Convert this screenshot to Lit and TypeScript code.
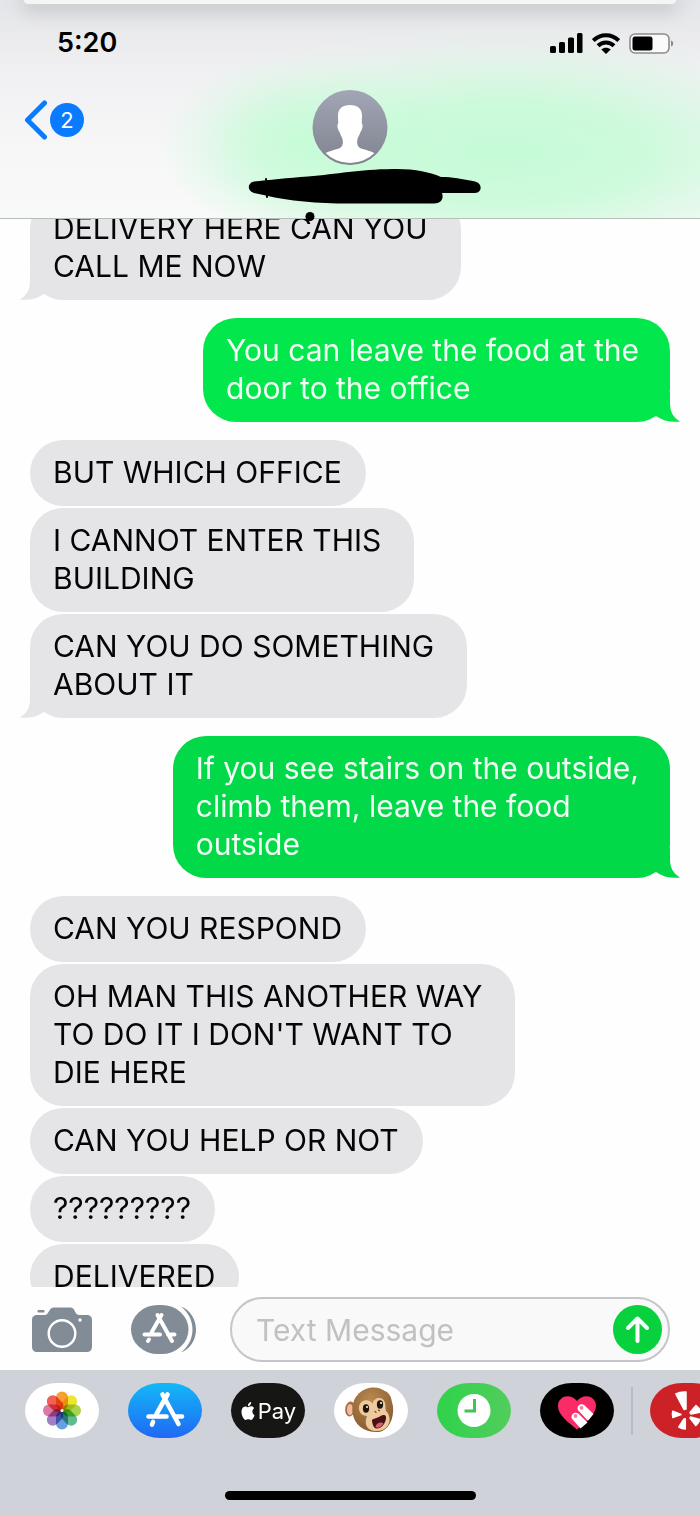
import { LitElement, html, css, svg, nothing } from "lit";
import { customElement, property } from "lit/decorators.js";

interface Message {
  from: "them" | "me";
  lines: string[];
  tail?: boolean;
  shade?: "bright" | "deep";
}

const MESSAGES: Message[] = [
  { from: "them", lines: ["DELIVERY HERE CAN YOU", "CALL ME NOW"], tail: true },
  { from: "me", lines: ["You can leave the food at the", "door to the office"], tail: true, shade: "bright" },
  { from: "them", lines: ["BUT WHICH OFFICE"] },
  { from: "them", lines: ["I CANNOT ENTER THIS", "BUILDING"] },
  { from: "them", lines: ["CAN YOU DO SOMETHING", "ABOUT IT"], tail: true },
  { from: "me", lines: ["If you see stairs on the outside,", "climb them, leave the food", "outside"], tail: true, shade: "deep" },
  { from: "them", lines: ["CAN YOU RESPOND"] },
  { from: "them", lines: ["OH MAN THIS ANOTHER WAY", "TO DO IT I DON'T WANT TO", "DIE HERE"] },
  { from: "them", lines: ["CAN YOU HELP OR NOT"] },
  { from: "them", lines: ["?????????"] },
  { from: "them", lines: ["DELIVERED"] },
];

@customElement("chat-bubble")
class ChatBubble extends LitElement {
  @property({ attribute: false }) message!: Message;

  static styles = css`
    :host { display: flex; }
    .bubble {
      position: relative;
      padding: 13px 24px 15px 23px;
      border-radius: 33px;
      background: #e5e5e8;
      color: #050505;
      fill: #e5e5e8;
      font-size: 30px;
      line-height: 38px;
    }
    .multi { padding-right: 33px; }
    .me { margin-left: auto; padding-right: 31px; color: #f2fff4; }
    .bright { background: #02e84c; fill: #02e84c; }
    .deep { background: #02d948; fill: #02d948; }
    .line { display: block; white-space: nowrap; position: relative; }
    .tail { position: absolute; bottom: 0; left: -10px; width: 34px; height: 30px; }
    .me .tail { left: auto; right: -10px; transform: scaleX(-1); }
  `;

  render() {
    const m = this.message;
    return html`<div class="bubble ${m.lines.length > 1 ? "multi" : ""} ${m.from} ${m.shade ?? ""}">
      ${m.tail
        ? html`<svg class="tail" viewBox="0 0 34 30" aria-hidden="true"><path d="M10 0V11C10 20 7 25 0 29.500C9 30.500 17 29 24 24L34 12Z" /></svg>`
        : nothing}
      ${m.lines.map((l) => html`<span class="line">${l}</span>`)}
    </div>`;
  }
}

const PETALS = ["#f8961e", "#ece11c", "#a0d03c", "#4db585", "#5596dc", "#9a6fc0", "#d96a9c", "#ee4f45"];

const storeGlyph = svg`<g fill="none" stroke="#fff" stroke-width="4.600" stroke-linecap="round">
  <path d="M39.500 11.500L28.500 31M34.500 11.500L50.500 41M20.500 33.500H38.500M47 33.500H54M25 39L24 41.500" />
</g>`;

const photos = svg`<rect width="74" height="55" rx="32" ry="27.500" fill="#fff"/>
  <g transform="translate(37 27.500)" class="flower">
    ${PETALS.map((c, i) => svg`<rect class="petal" x="-6" y="-19" width="12" height="18.500" rx="6" fill=${c} transform="rotate(${i * 45})"/>`)}
    <circle r="1.500" fill="#fff"/>
  </g>`;

const appStore = svg`<defs><linearGradient id="store" x2="0" y2="1"><stop stop-color="#12b8f8"/><stop offset="1" stop-color="#2068f4"/></linearGradient></defs>
  <rect width="74" height="55" rx="32" ry="27.500" fill="url(#store)"/>${storeGlyph}`;

const monkey = svg`<defs><radialGradient id="fur" cx=".45" cy=".3" r=".75"><stop stop-color="#b98a52"/><stop offset="1" stop-color="#85592e"/></radialGradient></defs>
  <rect width="74" height="55" rx="32" ry="27.500" fill="#fff"/>
  <ellipse cx="16" cy="26" rx="4.800" ry="7.500" fill="#a5713f" transform="rotate(8 16 26)"/>
  <ellipse cx="16" cy="26.500" rx="3" ry="5.500" fill="#f3b9a4"/>
  <ellipse cx="52.500" cy="15.500" rx="4.500" ry="7.500" fill="#a5713f" transform="rotate(-22 52.500 15.500)"/>
  <ellipse cx="53" cy="15.500" rx="2.400" ry="5.500" fill="#f3b9a4" transform="rotate(-22 53 15.500)"/>
  <path d="M38 4.500C49 3.500 56 11 58.500 21C61 32 56 48 44 49C31 49.500 20 43 18.500 29C17 15 27 5.500 38 4.500Z" fill="url(#fur)"/>
  <path d="M25 24C26 17 34 15 38.500 20.500C40 14.500 48 13 50.500 18.500C52 22 51 25 52 28C56 32 57 38 53.500 43C50 48 42 49.500 36 46.500C31 44 31 38 33 33C28 33 24.500 29 25 24Z" fill="#edca9e"/>
  <ellipse cx="32" cy="25.500" rx="3.100" ry="4.200" fill="#20140c"/>
  <ellipse cx="46" cy="21.500" rx="3.100" ry="4.200" fill="#20140c"/>
  <circle cx="33" cy="24" r="1" fill="#fff"/><circle cx="47" cy="20" r="1" fill="#fff"/>
  <path d="M41 28.500L42 29.300M44.500 27L45.500 27.800" stroke="#7c5030" stroke-width="1.300" stroke-linecap="round"/>
  <path d="M38 38C37.500 36.500 39 36 41 35.500C45 34.500 47 32 50 32C53 32 52.500 37 50 41C47.500 45 43 46.500 41 45C39 43.500 38.500 40.500 38 38Z" fill="#4c1014"/>
  <path d="M41.500 44C42 40 47 38.500 49.500 40.500C47 44.500 43.500 45.500 41.500 44Z" fill="#d2606a"/>`;

const clock = svg`<defs><linearGradient id="clk" x1="0" x2="1"><stop stop-color="#2fd24b"/><stop offset="1" stop-color="#52cd5d"/></linearGradient></defs>
  <rect width="74" height="55" rx="32" ry="27.500" fill="url(#clk)"/>
  <circle cx="37" cy="27.500" r="16.500" fill="#fff"/>
  <path d="M37.500 16V28H27.500" fill="none" stroke="#3fc455" stroke-width="3"/>`;

const heart = svg`<defs><clipPath id="hc"><path d="M37 46.500C29 40 17.500 32 18 22.500C18.500 12.500 31 10 37 18C43 10 55.500 12.500 56 22.500C56 32 45 40 37 46.500Z"/></clipPath></defs>
  <rect width="74" height="55" rx="32" ry="27.500"/>
  <g clip-path="url(#hc)"><rect width="74" height="55" fill="#fb2b67"/></g>
  <g fill="#fff">
    <path d="M31.800 35.500C30.500 31.500 34 28.500 38 30.300L47.500 39.500L40.500 45.500Z"/>
    <path d="M37.800 27C36.500 23 40 20 44 21.800L53.500 31L48 37.800Z"/>
  </g>
  <circle cx="35.500" cy="33" r="1.900" fill="#fb7fa2"/><circle cx="41.500" cy="24.800" r="1.900" fill="#fb7fa2"/>`;

const yelp = svg`<rect width="74" height="55" rx="32" ry="27.500" fill="#cc2127"/>
  <g fill="#fff" stroke="#fff" stroke-width="1.500" stroke-linejoin="round">
    <path d="M25.800 11C29 9.300 32.500 8.700 36 9V26L34 26.500Z"/>
    <path d="M22.800 28.300L31 31.500L22.800 34.500C22.200 32.500 22.200 30.500 22.800 28.300Z"/>
    <path d="M35.300 35.800V46C33 46 30.500 45 28.800 44L34 36Z"/>
    <path d="M40.500 34L50 36.500C49 39 47.500 41 45.800 42.500L40 35Z"/>
    <path d="M40 29.500L46 22.500C48.500 24.500 50 26.500 51 29L41 31Z"/>
  </g>`;

const APPS = [
  { label: "Photos", art: photos },
  { label: "App Store", art: appStore },
  { label: "Pay", art: null },
  { label: "Animoji", art: monkey },
  { label: "Activity", art: clock },
  { label: "Digital Touch", art: heart },
];

@customElement("app-root")
class AppRoot extends LitElement {
  static styles = css`
    :host {
      display: flex;
      flex-direction: column;
      height: 100vh;
      overflow: hidden;
      background: #fefefe;
      font-family: Inter, "Liberation Sans", sans-serif;
    }
    * { box-sizing: border-box; }
    svg { display: block; }
    button { border: 0; padding: 0; background: none; font: inherit; color: inherit; flex: none; }
    .header {
      position: relative;
      z-index: 2;
      flex: none;
      height: 219px;
      border-bottom: 1px solid #b3bfb7;
      background:
        radial-gradient(ellipse 20% 42% at 43% 66%, #c3fcd5d0 0%, #c3fcd590 40%, #c3fcd530 75%, #c3fcd500 100%),
        radial-gradient(ellipse 50% 58% at 72% 70%, #c5fbd7 0%, #c7fbd8e0 40%, #d0f9dd80 68%, #dcf8e530 86%, #e8f7ec00 100%),
        linear-gradient(#e4e5e8 0%, #f0f0f2 32%, #f7f7f8 70%, #f9f9f9 100%);
    }
    .sheet {
      height: 4px;
      margin: 0 24px;
      border-radius: 0 0 24px 24px;
      background: #f5f5f5;
      box-shadow: 0 2px 20px 2px #00000048;
    }
    .status {
      display: flex;
      align-items: center;
      justify-content: space-between;
      height: 78px;
      padding: 0 26px 0 57px;
    }
    .time { font-size: 27px; font-weight: 600; line-height: 32px; }
    .indicators { display: flex; align-items: center; gap: 9px; }
    .nav {
      display: grid;
      grid-template-columns: 1fr auto 1fr;
      align-items: start;
      padding: 8px 24px;
    }
    .back { display: flex; align-items: center; gap: 3px; height: 60px; justify-self: start; }
    .count {
      width: 34px;
      border-radius: 17px;
      background: #0a7bff;
      color: #fff;
      font-size: 22px;
      line-height: 34px;
      text-align: center;
    }
    .contact { position: relative; }
    .scribble { position: absolute; top: 76px; left: -64px; }
    .chat { flex: 1; min-height: 0; overflow: hidden; }
    .list {
      display: flex;
      flex-direction: column;
      gap: 2px;
      margin: -23px 30px 0;
    }
    .turn { margin-top: 16px; }
    .composer {
      flex: none;
      display: flex;
      align-items: center;
      padding: 10px 30px 8px;
    }
    .camera { margin: 0 38px 0 2px; }
    .drawer-toggle { margin-right: 33px; }
    .field {
      flex: 1;
      min-width: 0;
      display: flex;
      align-items: center;
      height: 65px;
      padding: 0 6px 0 24px;
      border: 2px solid #c6c6c9;
      border-radius: 33px;
      background: #f9f9f9;
    }
    .input {
      flex: 1;
      min-width: 0;
      border: 0;
      outline: 0;
      padding: 0;
      background: none;
      font: 400 30px/38px Inter, "Liberation Sans", sans-serif;
      color: #000;
    }
    .input::placeholder { color: #c1c1c4; opacity: 1; }
    .drawer {
      flex: none;
      height: 145px;
      display: flex;
      flex-direction: column;
      justify-content: space-between;
      padding: 13px 0 15px 25px;
      background: #cfd2d9;
      overflow: hidden;
    }
    .apps { display: flex; align-items: center; gap: 29px; }
    .flower { isolation: isolate; }
    .petal { mix-blend-mode: multiply; opacity: 0.9; }
    .pay {
      display: flex;
      align-items: center;
      justify-content: center;
      gap: 2px;
      width: 74px;
      height: 55px;
      border-radius: 32px / 28px;
      background: #161614;
      color: #fff;
      font-size: 22px;
      line-height: 28px;
    }
    .divider { flex: none; width: 2px; height: 48px; margin: 0 -12px; background: #b9bbc5; }
    .home { align-self: center; width: 251px; height: 9px; margin-right: 25px; border-radius: 5px; background: #000; }
  `;

  render() {
    return html`
      <header class="header">
        <div class="sheet"></div>
        <div class="status">
          <span class="time">5:20</span>
          <div class="indicators">
            <svg width="33" height="20" viewBox="0 0 33 20" aria-label="Signal">
              <rect y="13" width="6" height="7" rx="1.500"/><rect x="9" y="9" width="6" height="11" rx="1.500"/>
              <rect x="18" y="4.500" width="6" height="15.500" rx="1.500"/><rect x="27" width="5.500" height="20" rx="1.500"/>
            </svg>
            <svg width="28" height="21" viewBox="0 0 28 21" aria-label="Wi-Fi">
              <g fill="none" stroke="#000" stroke-width="4"><path d="M1.300 7.500C8.500 0.500 19.500 0.500 26.700 7.500M6 12.700C10.500 8.300 17.500 8.300 22 12.700"/></g>
              <path d="M9.300 16.500C12 14.300 16 14.300 18.700 16.500L14 21Z"/>
            </svg>
            <svg width="45" height="21" viewBox="0 0 45 21" aria-label="Battery">
              <rect x="1" y="1" width="39" height="19" rx="5" fill="#fafafa" stroke="#8c8c8e" stroke-width="1.600"/>
              <rect x="3.500" y="3.500" width="20" height="14" rx="2.500"/>
              <path d="M42 7.500C45 8 45 13 42 13.500Z" fill="#8c8c8e"/>
            </svg>
          </div>
        </div>
        <div class="nav">
          <button class="back" aria-label="Back, 2 unread">
            <svg width="23" height="40" viewBox="0 0 23 40"><path d="M20.500 3L3.500 20L20.500 37" fill="none" stroke="#0a7bff" stroke-width="5" stroke-linecap="round" stroke-linejoin="round"/></svg>
            <span class="count">2</span>
          </button>
          <div class="contact">
            <svg width="76" height="75" viewBox="0 0 76 75" aria-label="Contact">
              <defs>
                <linearGradient id="av" x2="0" y2="1"><stop stop-color="#a2a5b4"/><stop offset="1" stop-color="#80848f"/></linearGradient>
                <clipPath id="avc"><circle cx="38" cy="37.500" r="35.500"/></clipPath>
              </defs>
              <circle cx="38" cy="37.500" r="37.500" fill="url(#av)"/>
              <path clip-path="url(#avc)" fill="#fff" d="M38 15C46 15 50.500 19 50 27C50 30 49.500 32 50 34C51.500 35 50 40 48.500 42C47.500 45 46 47 45.500 49C44.500 54 45.500 57 49 58.500C54 60 59 61 64 64V76H12V64C17 61 22 60 27 58.500C30.500 57 31.500 54 30.500 49C30 47 28.500 45 27.500 42C26 40 24.500 35 26 34C26.500 32 26 30 26 27C25.500 19 30 15 38 15Z"/>
            </svg>
            <svg class="scribble" width="236" height="58" viewBox="0 0 236 58" aria-hidden="true">
              <path d="M6 15.500C20 14 40 12 60 10.500C90 8 110 3.500 145 3C165 2.500 182 6 193 11C204 11 214 13 227 15.500C234.500 17 234.500 27 227 27H194C196 33 193 37 186 37.500H100C70 37.500 40 35 18 29.500L6 27C-1 25 -1 17 6 15.500Z"/>
              <path d="M18 13L19 31" stroke="#000" stroke-width="2" stroke-linecap="round"/>
              <circle cx="62" cy="50.500" r="4.500"/>
            </svg>
          </div>
        </div>
      </header>

      <main class="chat">
        <div class="list">
          ${MESSAGES.map(
            (m, i) => html`<chat-bubble class=${i && MESSAGES[i - 1].from !== m.from ? "turn" : ""} .message=${m}></chat-bubble>`
          )}
        </div>
      </main>

      <form class="composer" @submit=${(e: Event) => e.preventDefault()}>
        <button class="camera" type="button" aria-label="Camera">
          <svg width="60" height="46" viewBox="0 0 60 46">
            <path fill="#828c97" d="M6 8H13C16 8 17 3 19 1.500C20 .5 21 .5 23 .5H37C39 .5 40.500 .5 41.500 2C43 4 44 8 47 8H54C58.500 8 60 10 60 13V39C60 43 58.500 45 54 45H6C1.500 45 0 43 0 39V13C0 10 1.500 8 6 8Z"/>
            <rect x="5.500" y="3" width="7" height="2.500" rx="1" fill="#828c97"/>
            <circle cx="30" cy="26.500" r="13.300" fill="none" stroke="#fff" stroke-width="2.400"/>
            <circle cx="48" cy="13" r="1.700" fill="#fff"/>
          </svg>
        </button>
        <button class="drawer-toggle" type="button" aria-label="Apps">
          <svg width="67" height="50" viewBox="0 0 67 50">
            <rect x="1" width="57.500" height="49" rx="27" ry="24.500" fill="#828c97"/>
            <path d="M51 1.500C60 5 66 14 66 24.500S60 44 51 47.500C58 42 62.500 34 62.500 24.500S58 7 51 1.500Z" fill="#828c97"/>
            <g fill="none" stroke="#fff" stroke-width="4" stroke-linecap="round"><path d="M31.500 10L21.500 27.500M27.500 10L42 36M14.500 29.500H30M38 29.500H44.500M19 34.500L18 36"/></g>
          </svg>
        </button>
        <div class="field">
          <input class="input" type="text" placeholder="Text Message" aria-label="Text Message" />
          <button type="submit" aria-label="Send">
            <svg width="49" height="49" viewBox="0 0 49 49">
              <circle cx="24.500" cy="24.500" r="24.500" fill="#07d13d"/>
              <path d="M24.500 36V13.500M15 23L24.500 13.500L34 23" fill="none" stroke="#fff" stroke-width="4" stroke-linecap="round" stroke-linejoin="round"/>
            </svg>
          </button>
        </div>
      </form>

      <footer class="drawer">
        <div class="apps">
          ${APPS.map((a) =>
            a.art
              ? html`<button aria-label=${a.label}><svg width="74" height="55" viewBox="0 0 74 55">${a.art}</svg></button>`
              : html`<button class="pay">
                  <svg width="16" height="18" viewBox="0 0 24 24" preserveAspectRatio="none" fill="#fff" aria-hidden="true"><path d="M12.152 6.896c-.948 0-2.415-1.078-3.960-1.040-2.040.027-3.910 1.183-4.961 3.014-2.117 3.675-.546 9.103 1.519 12.090 1.013 1.454 2.208 3.090 3.792 3.039 1.520-.065 2.090-.987 3.935-.987 1.831 0 2.350.987 3.960.948 1.637-.026 2.676-1.480 3.676-2.948 1.156-1.688 1.636-3.325 1.662-3.415-.039-.013-3.182-1.221-3.220-4.857-.026-3.040 2.480-4.494 2.597-4.559-1.429-2.090-3.623-2.324-4.390-2.376-2-.156-3.675 1.090-4.610 1.090zM15.530 3.830c.843-1.012 1.400-2.427 1.245-3.830-1.207.052-2.662.805-3.532 1.818-.78.896-1.454 2.338-1.273 3.714 1.338.104 2.715-.688 3.559-1.701"/></svg>
                  <span>Pay</span>
                </button>`
          )}
          <span class="divider"></span>
          <button aria-label="Yelp"><svg width="74" height="55" viewBox="0 0 74 55">${yelp}</svg></button>
        </div>
        <div class="home"></div>
      </footer>
    `;
  }
}
